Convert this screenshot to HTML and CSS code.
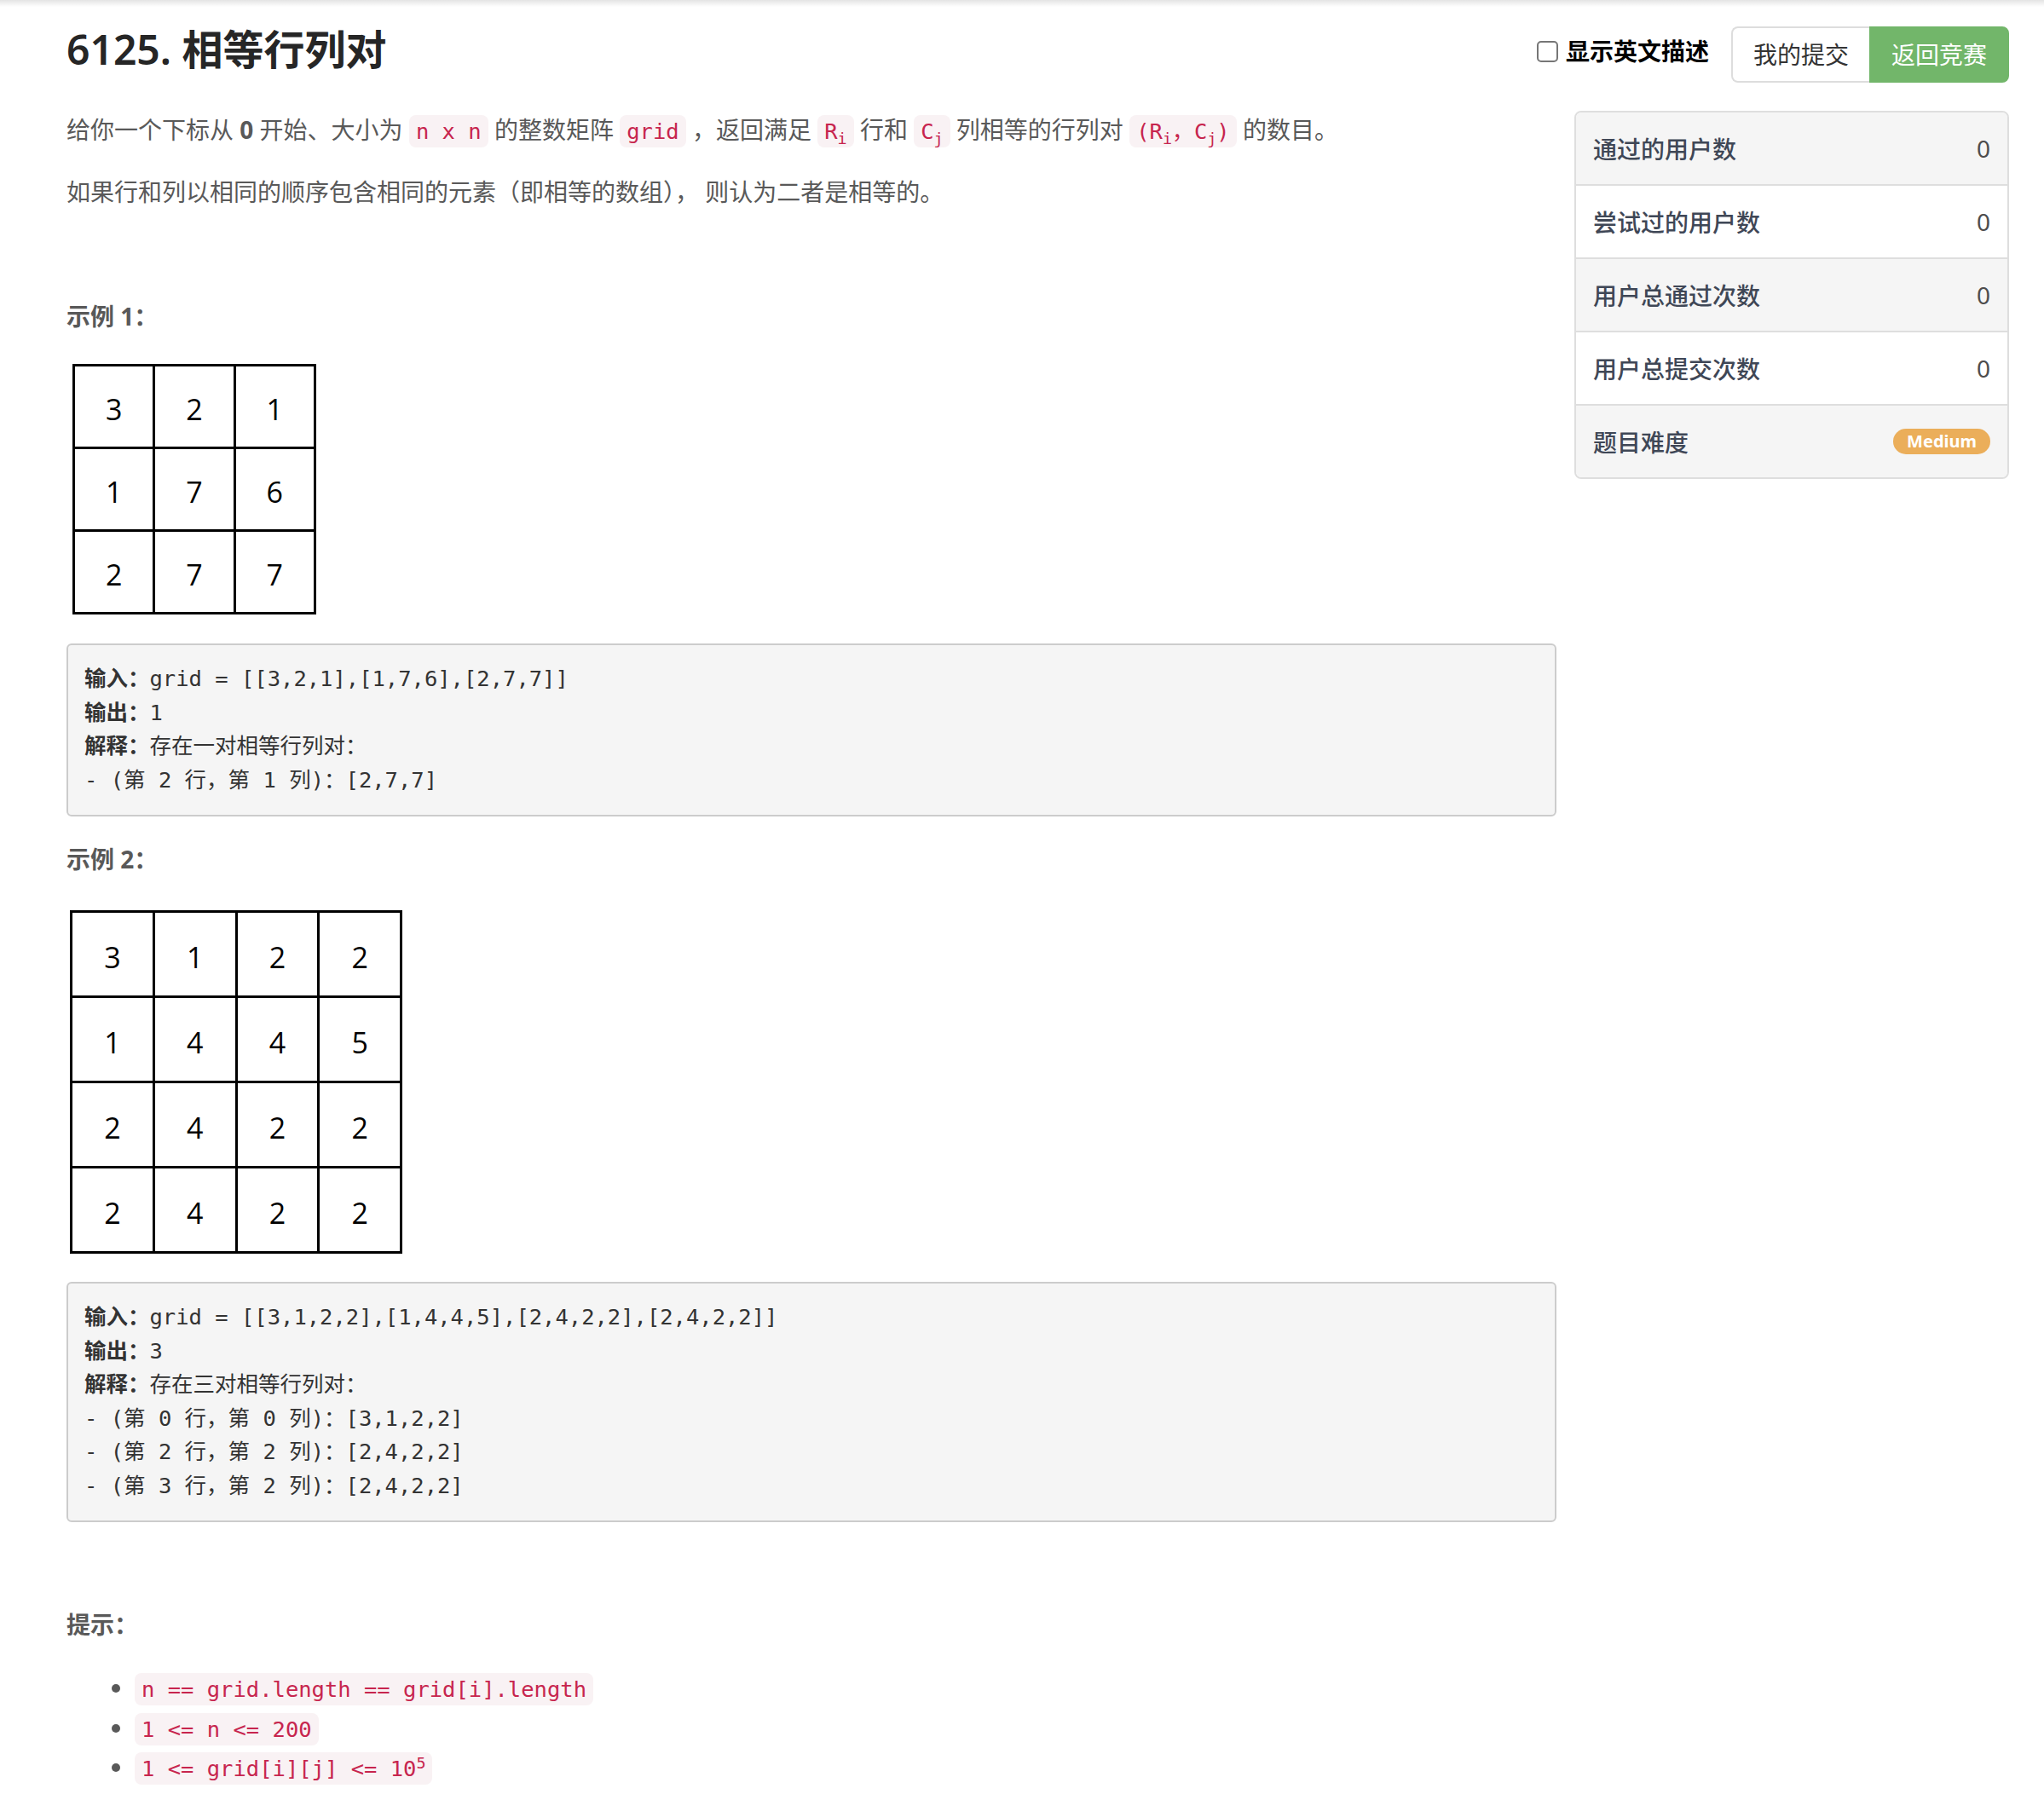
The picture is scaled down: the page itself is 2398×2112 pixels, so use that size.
FILE: index.html
```html
<!DOCTYPE html>
<html lang="zh-CN">
<head>
<meta charset="utf-8">
<title>6125. 相等行列对</title>
<link rel="stylesheet" href="styles.css">
</head>
<body>
<div class="topshadow"></div>
<div class="page">
  <header class="head">
    <h3 class="title">6125. 相等行列对</h3>
    <div class="controls">
      <label class="en-toggle"><input type="checkbox" class="cb"><span>显示英文描述</span></label>
      <div class="btn-group">
        <a class="btn btn-default">我的提交</a>
        <a class="btn btn-success">返回竞赛</a>
      </div>
    </div>
  </header>
  <div class="body">
    <main class="desc">
      <p>给你一个下标从 <strong>0</strong> 开始、大小为 <code>n x n</code> 的整数矩阵 <code>grid</code> ，返回满足 <code>R<sub>i</sub></code> 行和 <code>C<sub>j</sub></code> 列相等的行列对 <code>(R<sub>i</sub>，C<sub>j</sub>)</code> 的数目。</p>
      <p>如果行和列以相同的顺序包含相同的元素（即相等的数组）， 则认为二者是相等的。</p>
      <p>&nbsp;</p>
      <p class="ex ex1"><strong>示例 1：</strong></p>
      <table class="grid g3">
        <tr><td>3</td><td>2</td><td>1</td></tr>
        <tr><td>1</td><td>7</td><td>6</td></tr>
        <tr><td>2</td><td>7</td><td>7</td></tr>
      </table>
      <pre><strong>输入：</strong>grid = [[3,2,1],[1,7,6],[2,7,7]]
<strong>输出：</strong>1
<strong>解释：</strong>存在一对相等行列对：
- (第 2 行，第 1 列)：[2,7,7]</pre>
      <p class="ex ex2"><strong>示例 2：</strong></p>
      <table class="grid g4">
        <tr><td>3</td><td>1</td><td>2</td><td>2</td></tr>
        <tr><td>1</td><td>4</td><td>4</td><td>5</td></tr>
        <tr><td>2</td><td>4</td><td>2</td><td>2</td></tr>
        <tr><td>2</td><td>4</td><td>2</td><td>2</td></tr>
      </table>
      <pre><strong>输入：</strong>grid = [[3,1,2,2],[1,4,4,5],[2,4,2,2],[2,4,2,2]]
<strong>输出：</strong>3
<strong>解释：</strong>存在三对相等行列对：
- (第 0 行，第 0 列)：[3,1,2,2]
- (第 2 行，第 2 列)：[2,4,2,2]
- (第 3 行，第 2 列)：[2,4,2,2]</pre>
      <p class="spacer">&nbsp;</p>
      <p class="hint-title"><strong>提示：</strong></p>
      <ul class="hints">
        <li><code>n == grid.length == grid[i].length</code></li>
        <li><code>1 &lt;= n &lt;= 200</code></li>
        <li><code>1 &lt;= grid[i][j] &lt;= 10<sup>5</sup></code></li>
      </ul>
    </main>
    <aside class="side">
      <div class="stats">
        <div class="stat"><span class="stat-label">通过的用户数</span><span class="stat-value">0</span></div>
        <div class="stat"><span class="stat-label">尝试过的用户数</span><span class="stat-value">0</span></div>
        <div class="stat"><span class="stat-label">用户总通过次数</span><span class="stat-value">0</span></div>
        <div class="stat"><span class="stat-label">用户总提交次数</span><span class="stat-value">0</span></div>
        <div class="stat"><span class="stat-label">题目难度</span><span class="badge">Medium</span></div>
      </div>
    </aside>
  </div>
</div>
</body>
</html>
```

FILE: styles.css
```css
* { box-sizing: border-box; }
html, body { margin: 0; padding: 0; background: #fff; }
body {
  font-family: "Noto Sans", "Noto Sans CJK SC", sans-serif;
  font-size: 28px;
  color: #595959;
}
.topshadow { height: 8px; background: linear-gradient(#e4e4e4, #ffffff); }
.page { padding: 0 41px 0 78px; }

.head {
  display: flex;
  justify-content: space-between;
  align-items: flex-start;
  padding-top: 23px;
  margin-bottom: 33px;
}
.title {
  margin: 0;
  font-size: 48px;
  line-height: 54px;
  font-weight: 600;
  color: #262626;
}
.controls { display: flex; align-items: flex-start; }
.en-toggle {
  display: flex;
  align-items: center;
  margin-top: 7px;
  line-height: 45px;
  font-weight: 700;
  color: #000;
}
.cb {
  -webkit-appearance: none;
  appearance: none;
  width: 25px;
  height: 25px;
  margin: 0 9px 0 0;
  border: 2px solid #767676;
  border-radius: 5px;
  background: #fff;
}
.btn-group { display: flex; margin-left: 26px; }
.btn {
  display: block;
  height: 66px;
  line-height: 62px;
  padding: 0 24px;
  font-size: 28px;
  text-decoration: none;
  white-space: nowrap;
}
.btn-default {
  color: #333;
  background: #fff;
  border: 2px solid #dddddd;
  border-right: 0;
  border-radius: 8px 0 0 8px;
}
.btn-success {
  color: #fff;
  background: #72b66a;
  border: 2px solid #72b66a;
  border-radius: 0 8px 8px 0;
}

.body { display: flex; align-items: flex-start; gap: 21px; }
.desc { flex: 0 0 1748px; min-width: 0; }
.side { flex: 0 0 510px; }

.desc p { margin: 0 0 28px; line-height: 45px; }
.desc strong { font-weight: 700; }
.desc p.ex1 { margin-bottom: 33px; }
.desc p.ex2 { margin-bottom: 37px; }
.desc p.spacer { margin-bottom: 25px; }

code {
  font-family: "DejaVu Sans Mono", "Liberation Mono", monospace;
  font-size: 25.5px;
  line-height: 1;
  padding: 4px 8px;
  color: #c7254e;
  background: #f9f2f4;
  border-radius: 8px;
}
sub, sup { font-size: 72%; line-height: 0; }

.grid {
  border-collapse: separate;
  border-spacing: 3px;
  background: #000;
  table-layout: fixed;
  font-family: "Open Sans", "Liberation Sans", sans-serif;
  font-size: 34px;
  color: #000;
}
.grid td {
  background: #fff;
  padding: 6px 0 0;
  text-align: center;
  vertical-align: middle;
}
.g3 { width: 286px; margin: 0 0 34px 7px; }
.g3 td { height: 94px; }
.g4 { width: 390px; margin: 0 0 33px 4px; }
.g4 td { height: 97px; }

pre {
  margin: 0 0 28px;
  padding: 20px 19px 21px;
  background: #f5f5f5;
  border: 2px solid #cccccc;
  border-radius: 6px;
  font-family: "DejaVu Sans Mono", "Liberation Mono", "Noto Sans CJK SC", monospace;
  font-size: 25.5px;
  line-height: 39.5px;
  color: #333;
  white-space: pre-wrap;
}

.hints { margin: 0; padding-left: 80px; }
.hints li { line-height: 46.5px; }

.stats {
  border: 2px solid #dedede;
  border-radius: 8px;
  overflow: hidden;
}
.stat {
  display: flex;
  justify-content: space-between;
  align-items: center;
  height: 84px;
  padding: 0 20px;
  background: #f5f5f5;
}
.stat + .stat { height: 86px; border-top: 2px solid #dedede; }
.stat:nth-child(even) { background: #fff; }
.stat-label { color: #3f4756; font-weight: 500; }
.stat-value { color: #4d4d4d; }
.badge {
  display: inline-block;
  padding: 4px 16px;
  font-size: 20px;
  line-height: 22px;
  font-weight: 700;
  color: #fff;
  background: #ebae5a;
  border-radius: 15px;
}
```
